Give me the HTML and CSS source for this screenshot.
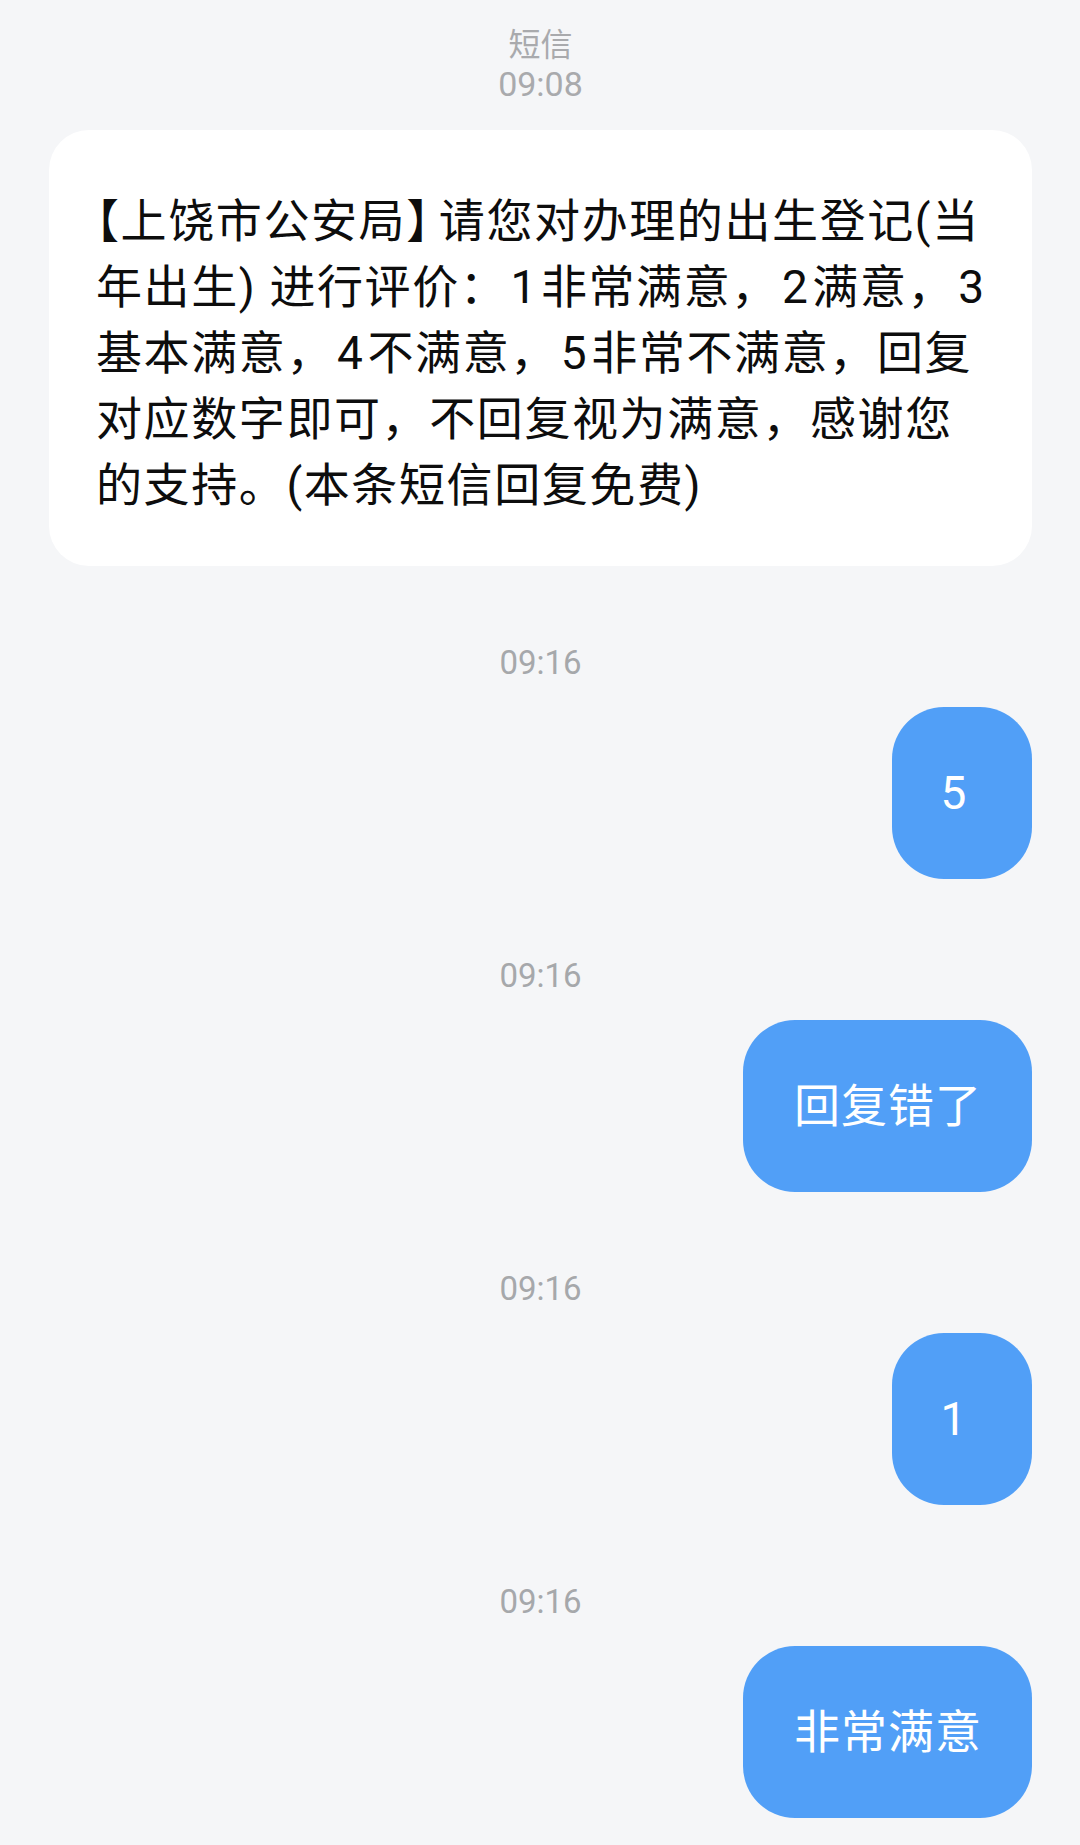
FILE: index.html
```html
<!DOCTYPE html>
<html lang="zh-CN">
<head>
<meta charset="utf-8">
<title>短信</title>
<link rel="stylesheet" href="styles.css">
</head>
<body>
<main class="chat">
  <header class="head">
    <div class="head-title">短信</div>
    <div class="head-time">09:08</div>
  </header>

  <div class="card">
    <p class="card-text"><span class="halt">【</span>上饶市公安局<span class="halt halt-close">】</span>请您对办理的出生登记(当<br>年出生) 进行评价：<span class="num">1</span>非常满意，<span class="num">2</span>满意，<span class="num">3</span><br>基本满意，<span class="num">4</span>不满意，<span class="num">5</span>非常不满意，回复<br>对应数字即可，不回复视为满意，感谢您<br>的支持。(本条短信回复免费)</p>
  </div>

  <section class="group">
    <div class="stamp">09:16</div>
    <div class="row"><div class="bubble bubble-short">5</div></div>
  </section>

  <section class="group">
    <div class="stamp">09:16</div>
    <div class="row"><div class="bubble">回复错了</div></div>
  </section>

  <section class="group">
    <div class="stamp">09:16</div>
    <div class="row"><div class="bubble bubble-short">1</div></div>
  </section>

  <section class="group">
    <div class="stamp">09:16</div>
    <div class="row"><div class="bubble">非常满意</div></div>
  </section>
</main>
</body>
</html>
```

FILE: styles.css
```css
html, body {
  margin: 0;
  padding: 0;
  background: #f5f6f8;
}

body {
  font-family: Roboto, "Noto Sans CJK SC", "Noto Sans", sans-serif;
  color: #111;
}

.chat {
  display: flex;
  flex-direction: column;
  padding: 22px 48px 40px 49px;
  min-height: 1845px;
  box-sizing: border-box;
}

.head {
  display: flex;
  flex-direction: column;
  align-items: center;
  color: #a9aaad;
}

.head-title {
  font-family: "Noto Sans CJK SC", sans-serif;
  font-size: 32px;
  line-height: 40px;
}

.head-time {
  font-size: 34px;
  line-height: 44px;
}

.card {
  margin-top: 24px;
  background: #ffffff;
  border-radius: 40px;
  padding: 54px 36px 48px 47px;
}

.card-text {
  margin: 0;
  font-size: 46px;
  line-height: 66px;
  letter-spacing: 1.6px;
  white-space: nowrap;
  color: #0d0d0d;
}

.num {
  margin: 0 3px;
}

.halt {
  font-family: "Noto Sans CJK SC", sans-serif;
  font-feature-settings: "halt" 1;
}

.halt-close {
  margin-right: 8px;
}

.group {
  margin-top: 77px;
  display: flex;
  flex-direction: column;
}

.stamp {
  text-align: center;
  font-size: 33px;
  line-height: 40px;
  color: #a6a8ab;
}

.row {
  margin-top: 24px;
  display: flex;
  justify-content: flex-end;
}

.bubble {
  background: #519ff7;
  color: #ffffff;
  border-radius: 52px;
  font-size: 46px;
  line-height: 66px;
  letter-spacing: 1px;
  padding: 53px 50px 53px 51px;
  min-width: 140px;
  box-sizing: border-box;
  text-align: center;
}

.bubble-short {
  width: 140px;
  padding-left: 0;
  padding-right: 16px;
}
```
